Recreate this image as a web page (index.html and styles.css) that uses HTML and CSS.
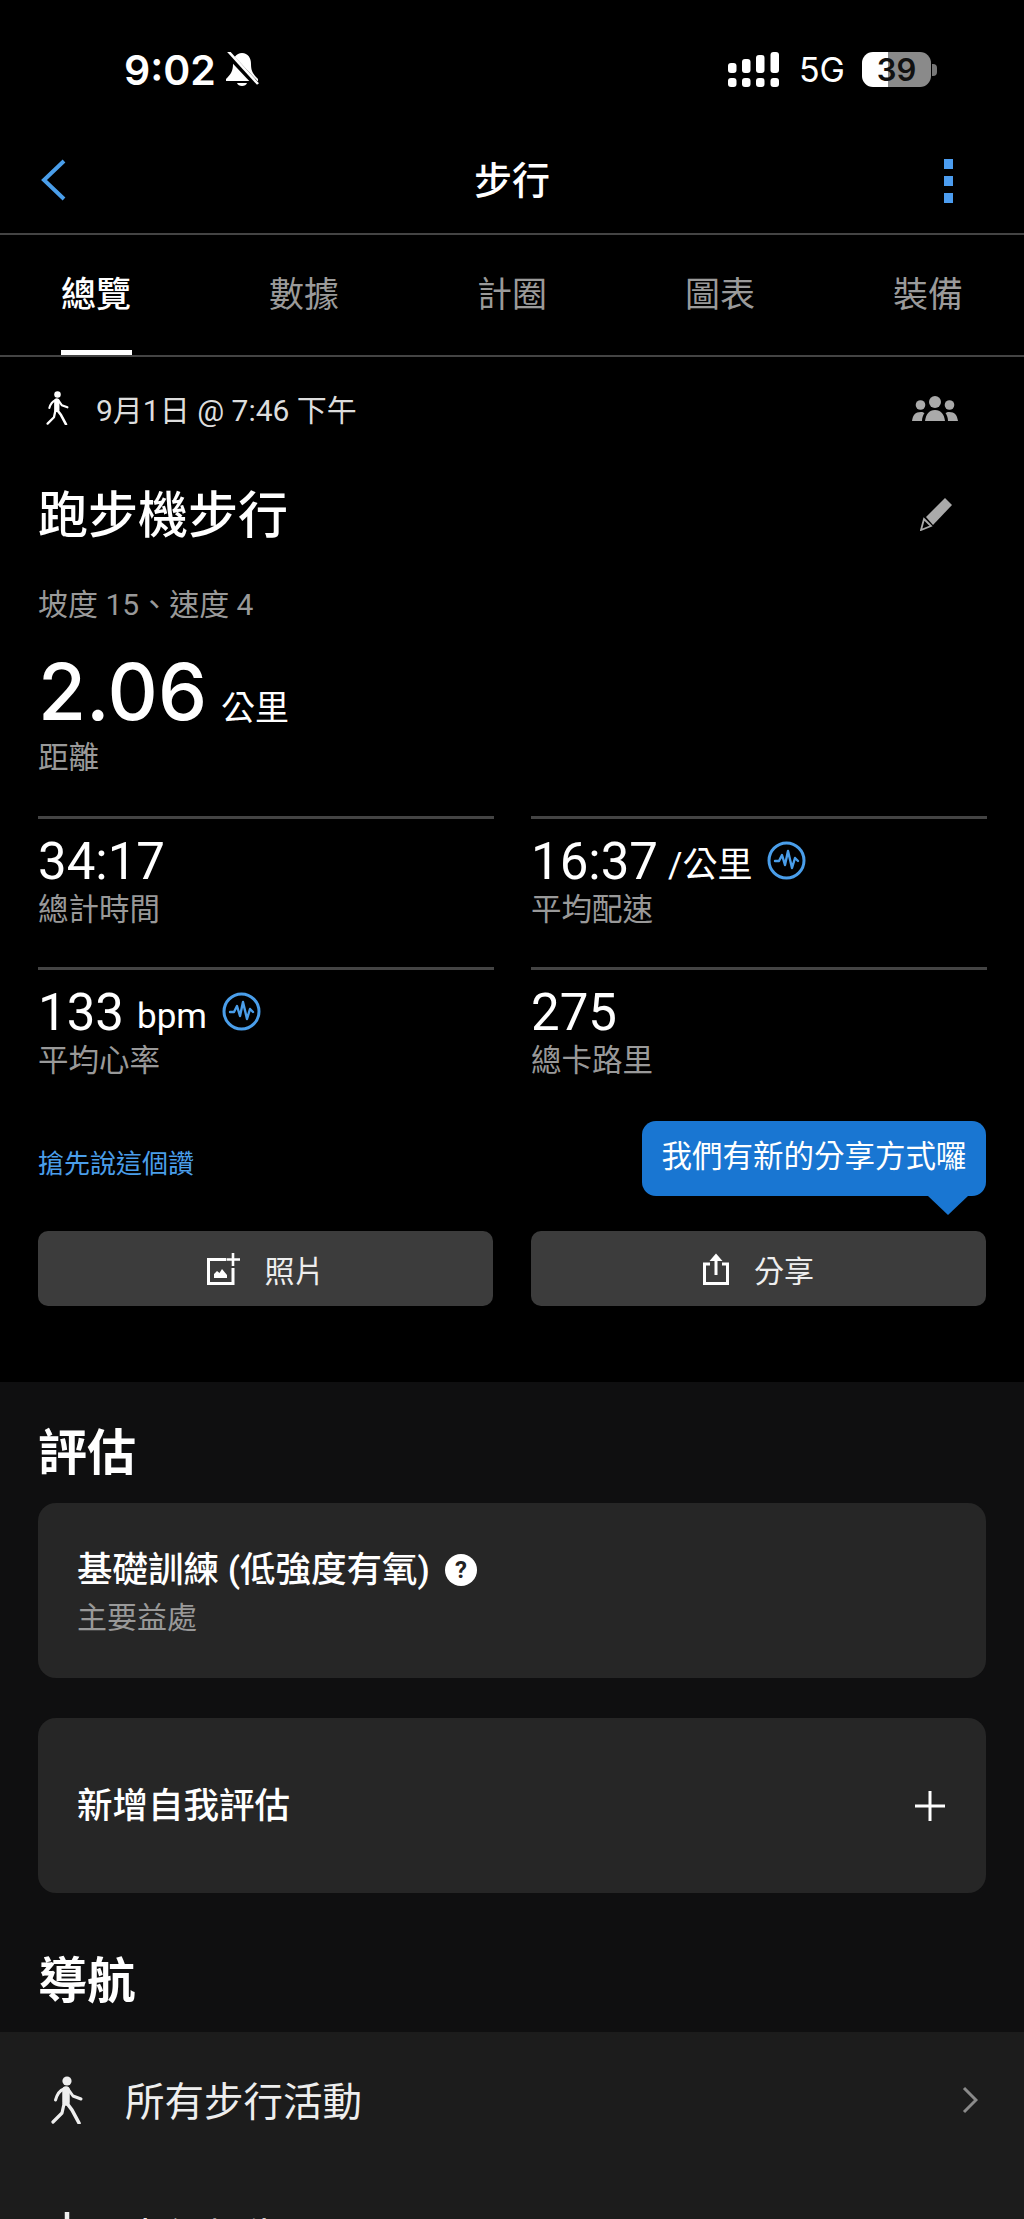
FILE: index.html
```html
<!DOCTYPE html>
<html lang="zh-Hant">
<head>
    <meta charset="UTF-8">
    <meta name="viewport" content="width=device-width, initial-scale=1.0">
    <title>步行</title>
    <link rel="stylesheet" href="styles.css">
</head>
<body>
    <svg class="defs" width="0" height="0">
        <symbol id="walker" viewBox="0 0 32 48">
            <circle cx="16" cy="5" r="4.6" fill="currentColor"/>
            <g fill="none" stroke="currentColor" stroke-linecap="round" stroke-linejoin="round">
                <path d="M15 14 L15 26" stroke-width="7.5"/>
                <path d="M13 13 Q7 15 4.5 24" stroke-width="3"/>
                <path d="M17 13 L22 20 L30 23" stroke-width="3"/>
                <path d="M15 26 L21 34 L28 47" stroke-width="3.6"/>
                <path d="M13 28 L11 37 L2 46" stroke-width="3.2"/>
            </g>
        </symbol>
        <symbol id="pulse" viewBox="0 0 39 39">
            <circle cx="19.5" cy="19.5" r="17.5" fill="none" stroke="currentColor" stroke-width="3"/>
            <path d="M8 20 L12 20 L15 14 L18 24 L21 10 L25 27 L28 17 L31 20" fill="none" stroke="currentColor" stroke-width="2.4" stroke-linejoin="round" stroke-linecap="round"/>
        </symbol>
    </svg>

    <!-- status bar -->
    <div class="status">
        <div class="status-left">
            <span class="time">9:02</span>
            <svg class="bell" viewBox="0 0 34 35">
                <path d="M17 1 C11 1 8 6 8 12 C8 19 6 22 1 27 L1 29 L33 29 L33 27 C28 22 26 19 26 12 C26 6 23 1 17 1 Z" fill="#fff"/>
                <path d="M12 31 H22 C21 35 13 35 12 31 Z" fill="#fff"/>
                <path d="M1 0 L34 35" stroke="#000" stroke-width="6"/>
                <path d="M3 -1 L33 32" stroke="#fff" stroke-width="2.6"/>
            </svg>
        </div>
        <div class="status-right">
            <svg class="signal" viewBox="0 0 55 35" fill="#fff">
                <rect x="0" y="11" width="8.5" height="10" rx="3"/>
                <rect x="14" y="7" width="8.5" height="14" rx="3"/>
                <rect x="28" y="3" width="8.5" height="18" rx="3"/>
                <rect x="42.5" y="0" width="8.5" height="21" rx="3"/>
                <rect x="0" y="26" width="8.5" height="9" rx="3"/>
                <rect x="14" y="26" width="8.5" height="9" rx="3"/>
                <rect x="28" y="26" width="8.5" height="9" rx="3"/>
                <rect x="42.5" y="26" width="8.5" height="9" rx="3"/>
            </svg>
            <span class="net">5G</span>
            <div class="battery"><span>39</span></div>
            <div class="battery-nub"></div>
        </div>
    </div>

    <!-- nav bar -->
    <div class="navbar">
        <svg class="back" viewBox="0 0 25 42"><path d="M23 2 L3 21 L23 40" fill="none" stroke="#4a9eea" stroke-width="4"/></svg>
        <div class="nav-title">步行</div>
        <div class="kebab"><i></i><i></i><i></i></div>
    </div>

    <div class="tabs">
        <div class="tab active">總覽</div>
        <div class="tab">數據</div>
        <div class="tab">計圈</div>
        <div class="tab">圖表</div>
        <div class="tab">裝備</div>
    </div>

    <!-- activity summary -->
    <div class="summary">
        <div class="date-row">
            <svg class="walk-small"><use href="#walker"/></svg>
            <span class="date">9月1日 @ 7:46 下午</span>
            <svg class="people" viewBox="0 0 46 25" fill="#aaa">
                <circle cx="8.5" cy="9" r="4.8"/>
                <circle cx="23" cy="6" r="6"/>
                <circle cx="37.5" cy="9" r="4.8"/>
                <path d="M13 25 C14 18 17 14 23 14 C29 14 32 18 33 25 Z"/>
                <path d="M0 25 C1 19 3 16 9 16 C10.5 16 11.5 16.5 12.5 17 C11 19 10 22 10 25 Z"/>
                <path d="M46 25 C45 19 43 16 37 16 C35.5 16 34.5 16.5 33.5 17 C35 19 36 22 36 25 Z"/>
            </svg>
        </div>
        <div class="title-row">
            <h1>跑步機步行</h1>
            <svg class="pencil" viewBox="0 0 32 33">
                <path d="M25 0 L32 7 L13 27 L6 19 Z" fill="#aaa"/>
                <path d="M4 21 L11 28 L1 32 Z" fill="none" stroke="#aaa" stroke-width="1.8"/>
            </svg>
        </div>
        <div class="note">坡度 15、速度 4</div>
        <div class="distance"><span class="big">2.06</span><span class="big-unit">公里</span></div>
        <div class="label distance-label">距離</div>

        <div class="stats">
            <div class="stat">
                <div class="stat-value">34:17</div>
                <div class="label">總計時間</div>
            </div>
            <div class="stat">
                <div class="stat-value">16:37<span class="unit unit-pace">/公里</span><svg class="pulse"><use href="#pulse"/></svg></div>
                <div class="label">平均配速</div>
            </div>
            <div class="stat">
                <div class="stat-value">133<span class="unit">bpm</span><svg class="pulse"><use href="#pulse"/></svg></div>
                <div class="label">平均心率</div>
            </div>
            <div class="stat">
                <div class="stat-value">275</div>
                <div class="label">總卡路里</div>
            </div>
        </div>

        <div class="like-row">
            <span class="like">搶先說這個讚</span>
            <div class="tooltip">我們有新的分享方式囉</div>
        </div>

        <div class="buttons">
            <div class="btn">
                <svg class="icon-photo" viewBox="0 0 33 32">
                    <path d="M19 6.5 H1.5 V30.5 H26 V15" fill="none" stroke="#fff" stroke-width="3"/>
                    <path d="M26 0 V13 M19.5 6.5 H33" stroke="#fff" stroke-width="2.6"/>
                    <path d="M7 25 L7 21 L10 18 L12.5 20 L15 16 L20 22 L20 25 Z" fill="#fff"/>
                </svg>
                <span>照片</span>
            </div>
            <div class="btn">
                <svg class="icon-share" viewBox="0 0 26 32">
                    <path d="M7 11 H1.5 V30.5 H24.5 V11 H19" fill="none" stroke="#fff" stroke-width="3"/>
                    <path d="M13 22 V3" stroke="#fff" stroke-width="3"/>
                    <path d="M6.5 8 L13 0.5 L19.5 8 Z" fill="#fff"/>
                </svg>
                <span>分享</span>
            </div>
        </div>
    </div>

    <!-- lower section -->
    <div class="lower">
        <h2>評估</h2>
        <div class="card">
            <div class="card-title">基礎訓練 (低強度有氧)<span class="help">?</span></div>
            <div class="card-sub">主要益處</div>
        </div>
        <div class="card card-add">
            <div class="card-title">新增自我評估</div>
            <svg class="plus" viewBox="0 0 30 30"><path d="M15 0 V30 M0 15 H30" stroke="#fff" stroke-width="3"/></svg>
        </div>
        <h2 class="nav-heading">導航</h2>
    </div>

    <div class="list">
        <div class="row">
            <svg class="row-icon"><use href="#walker"/></svg>
            <span class="row-text">所有步行活動</span>
            <svg class="chevron" viewBox="0 0 16 28"><path d="M2 2 L14 14 L2 26" fill="none" stroke="#8a8a8a" stroke-width="3"/></svg>
        </div>
        <div class="row">
            <svg class="row-icon" viewBox="0 0 32 48"><path d="M16 0 V48 M2 30 V48 M30 20 V48" fill="none" stroke="#eee" stroke-width="4.5"/></svg>
            <span class="row-text">步行報告</span>
            <svg class="chevron" viewBox="0 0 16 28"><path d="M2 2 L14 14 L2 26" fill="none" stroke="#8a8a8a" stroke-width="3"/></svg>
        </div>
    </div>
</body>
</html>
```

FILE: styles.css
```css
* {
    box-sizing: border-box;
}

html, body {
    margin: 0;
    padding: 0;
    height: 2219px;
    overflow: hidden;
}

body {
    font-family: Roboto, "Noto Sans CJK TC", sans-serif;
    background-color: #000;
    color: #fff;
}

.defs {
    position: absolute;
}

/* status bar */
.status {
    height: 136px;
    display: flex;
    justify-content: space-between;
    align-items: center;
    padding: 3px 87px 0 124px;
}

.status-left {
    display: flex;
    align-items: center;
    gap: 9px;
}

.time {
    font-family: Inter, sans-serif;
    font-size: 41px;
    font-weight: 600;
    line-height: 40px;
}

.bell {
    width: 34px;
    height: 35px;
}

.status-right {
    display: flex;
    align-items: center;
}

.signal {
    width: 55px;
    height: 35px;
    margin-right: 16px;
}

.net {
    font-family: Inter, sans-serif;
    font-size: 34px;
    line-height: 35px;
    margin-right: 17px;
}

.battery {
    width: 69px;
    height: 35px;
    border-radius: 11px;
    background: linear-gradient(to right, #fff 38%, #8a8a8a 38%);
    color: #111;
    font-family: Inter, sans-serif;
    font-size: 31px;
    font-weight: 600;
    line-height: 35px;
    text-align: center;
}

.battery-nub {
    width: 5px;
    height: 12px;
    margin-left: 1px;
    background-color: #777;
    border-radius: 0 4px 4px 0;
}

/* nav bar */
.navbar {
    height: 99px;
    display: grid;
    grid-template-columns: 1fr auto 1fr;
    align-items: center;
    padding: 0 41px 8px;
    border-bottom: 2px solid #444;
}

.back {
    width: 25px;
    height: 42px;
    margin-bottom: 2px;
}

.nav-title {
    font-size: 38px;
    font-weight: 500;
    line-height: 50px;
}

.kebab {
    justify-self: end;
    margin-right: 30px;
    display: flex;
    flex-direction: column;
    gap: 7px;
}

.kebab i {
    display: block;
    width: 9px;
    height: 10px;
    background-color: #4c9df0;
}

.tabs {
    height: 122px;
    display: flex;
    gap: 137px;
    padding-left: 61px;
    border-bottom: 2px solid #444;
}

.tab {
    width: 71px;
    height: 120px;
    padding-top: 39px;
    font-size: 35px;
    line-height: 44px;
    color: #9a9a9a;
    white-space: nowrap;
}

.tab.active {
    color: #fff;
    font-weight: 500;
    border-bottom: 5px solid #fff;
}

/* summary */
.summary {
    height: 1025px;
    padding: 0 38px;
}

.date-row {
    height: 102px;
    display: flex;
    align-items: center;
}

.walk-small {
    width: 23px;
    height: 34px;
    margin: 0 27px 0 8px;
    color: #fff;
}

.date {
    font-size: 30px;
    color: #ddd;
    flex: 1;
}

.people {
    width: 46px;
    height: 25px;
    margin-right: 28px;
}

.title-row {
    height: 114px;
    display: flex;
    justify-content: space-between;
    align-items: center;
}

h1 {
    margin: 0;
    font-size: 50px;
    font-weight: 500;
    line-height: 60px;
}

.pencil {
    width: 32px;
    height: 33px;
    margin: 0 34px 4px 0;
}

.note {
    height: 64px;
    font-size: 30px;
    line-height: 64px;
    color: #999;
}

.distance {
    height: 100px;
    padding-top: 10px;
    display: flex;
    align-items: baseline;
    line-height: 90px;
}

.big {
    font-family: Inter, sans-serif;
    font-size: 78px;
    font-weight: 500;
}

.big-unit {
    font-size: 34px;
    margin-left: 14px;
}

.label {
    font-size: 30.5px;
    line-height: 40px;
    color: #999;
}

.distance-label {
    margin-top: 1px;
    height: 78px;
}

.stats {
    display: grid;
    grid-template-columns: 456px 456px;
    gap: 0 37px;
}

.stat {
    height: 151px;
    padding-top: 16px;
    border-top: 3px solid #444;
}

.stat-value {
    display: flex;
    align-items: center;
    height: 54px;
    font-size: 51px;
    line-height: 54px;
    white-space: nowrap;
}

.stat .label {
    margin-top: 1px;
}

.unit {
    font-size: 35px;
    margin: 8px 0 0 13px;
}

.unit-pace {
    margin-left: 10px;
}

.pulse {
    width: 39px;
    height: 39px;
    margin: 0 0 3px 15px;
    color: #4a9eea;
}

.like-row {
    position: relative;
    height: 113px;
    padding-top: 27px;
}

.like {
    font-size: 26px;
    line-height: 38px;
    color: #4a9eea;
}

.tooltip {
    position: absolute;
    top: 3px;
    right: 0;
    width: 344px;
    height: 75px;
    border-radius: 14px;
    background-color: #1976d2;
    font-size: 30.5px;
    line-height: 72px;
    text-align: center;
    white-space: nowrap;
}

/* the small arrow pointing down at the share button */
.tooltip::after {
    content: "";
    position: absolute;
    top: 75px;
    right: 18px;
    border-left: 20px solid transparent;
    border-right: 20px solid transparent;
    border-top: 19px solid #1976d2;
}

.buttons {
    display: grid;
    grid-template-columns: 455px 455px;
    gap: 38px;
}

.btn {
    height: 75px;
    display: flex;
    justify-content: center;
    align-items: center;
    gap: 25px;
    border-radius: 10px;
    background-color: #3c3c3c;
    font-size: 30px;
    color: #eee;
}

.icon-photo {
    width: 33px;
    height: 32px;
}

.icon-share {
    width: 26px;
    height: 32px;
}

/* lower section */
.lower {
    height: 650px;
    padding: 48px 38px 0;
    background-color: #0f0f10;
}

h2 {
    margin: 0 0 25px;
    font-size: 49px;
    font-weight: 700;
    line-height: 48px;
}

.nav-heading {
    margin-top: 65px;
}

.card {
    height: 175px;
    margin-bottom: 40px;
    padding: 46px 39px 0;
    border-radius: 18px;
    background-color: #262626;
}

.card-title {
    display: flex;
    align-items: center;
    font-size: 35.5px;
    font-weight: 500;
    line-height: 42px;
    white-space: nowrap;
}

.card-sub {
    margin-top: 7px;
    font-size: 30px;
    line-height: 40px;
    color: #999;
}

.help {
    width: 32px;
    height: 32px;
    margin-left: 15px;
    border-radius: 50%;
    background-color: #fff;
    color: #222;
    font-size: 24px;
    font-weight: 700;
    line-height: 32px;
    text-align: center;
}

.card-add {
    display: flex;
    justify-content: space-between;
    align-items: center;
    padding: 0 41px 0 39px;
    margin-bottom: 0;
}

.plus {
    width: 30px;
    height: 30px;
}

/* nav list */
.list {
    background-color: #1c1c1c;
}

.row {
    height: 136px;
    display: flex;
    align-items: center;
    padding: 0 46px 0 51px;
    color: #eee;
}

.row-icon {
    width: 32px;
    height: 48px;
    margin-right: 42px;
}

.row-text {
    flex: 1;
    font-size: 39.5px;
    padding-bottom: 4px;
}

.chevron {
    width: 16px;
    height: 28px;
}
```
